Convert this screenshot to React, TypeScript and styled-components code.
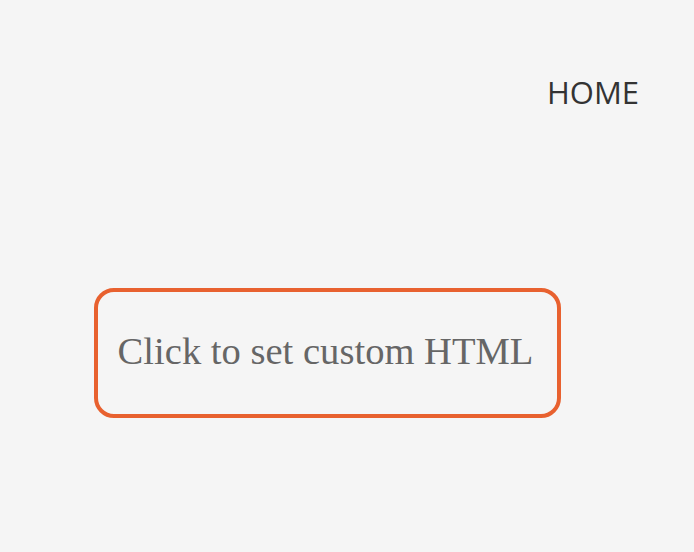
import React from "react";
import styled, { createGlobalStyle } from "styled-components";

const Global = createGlobalStyle`
  html, body { margin: 0; padding: 0; background: #f5f5f5; }
  body { width: 694px; height: 552px; overflow: hidden; }
`;

const Page = styled.div`
  width: 694px;
  height: 552px;
  background: #f5f5f5;
  display: flex;
  flex-direction: column;
`;

const Header = styled.header`
  display: flex;
  justify-content: flex-end;
  padding: 72px 55px 0 0;
`;

const NavLink = styled.a`
  font-family: "Open Sans", sans-serif;
  font-size: 31px;
  line-height: 40px;
  color: #333333;
  text-decoration: none;
`;

const Body = styled.main`
  display: flex;
  padding: 176px 0 0 94px;
`;

const HtmlBlock = styled.div`
  box-sizing: border-box;
  width: 467px;
  height: 130px;
  border: 4px solid #e8612f;
  border-radius: 20px;
  display: flex;
  align-items: flex-start;
  justify-content: center;
  padding: 37px 4px 0 0;
  font-family: "Liberation Serif", "Times New Roman", serif;
  font-size: 38.6px;
  line-height: 44px;
  color: #666666;
  cursor: pointer;
`;

export default function App() {
  return (
    <>
      <Global />
      <Page>
        <Header>
          <NavLink href="#">HOME</NavLink>
        </Header>
        <Body>
          <HtmlBlock>Click to set custom HTML</HtmlBlock>
        </Body>
      </Page>
    </>
  );
}
